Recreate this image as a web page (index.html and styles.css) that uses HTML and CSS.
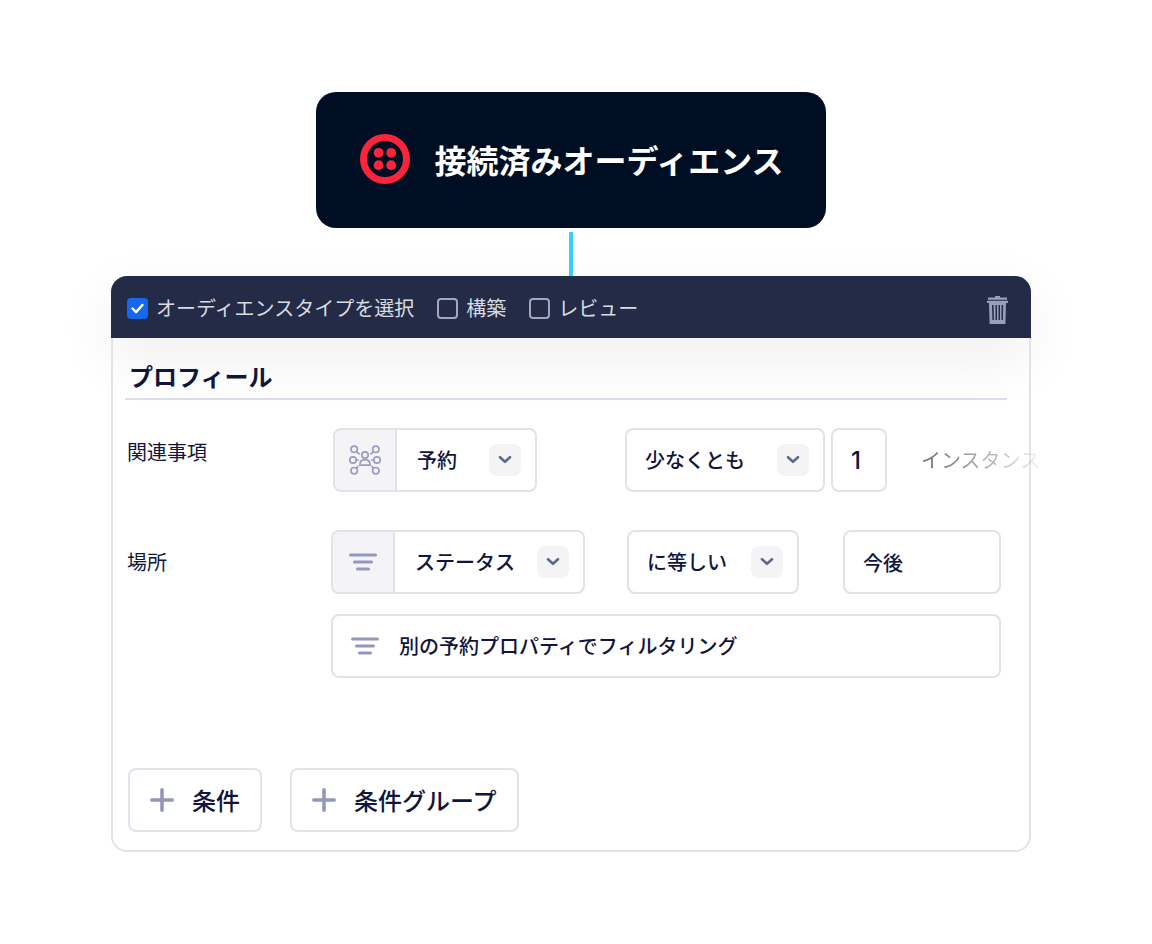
FILE: index.html
```html
<!DOCTYPE html>
<html lang="ja">
<head>
    <meta charset="UTF-8">
    <meta name="viewport" content="width=device-width, initial-scale=1.0">
    <title>接続済みオーディエンス</title>
    <link rel="stylesheet" href="styles.css">
</head>
<body>
    <main class="page">
        <header class="source">
            <svg class="source-logo" viewBox="0 0 50 50" aria-hidden="true">
                <circle cx="25" cy="25" r="21.5" fill="none" stroke="#f9253b" stroke-width="7"/>
                <g fill="#f9253b">
                    <circle cx="18.6" cy="18.8" r="4.9"/>
                    <circle cx="31.2" cy="18.8" r="4.9"/>
                    <circle cx="18.6" cy="31.2" r="4.9"/>
                    <circle cx="31.2" cy="31.2" r="4.9"/>
                </g>
            </svg>
            <h1 class="source-title">接続済みオーディエンス</h1>
        </header>
        <div class="connector"></div>

        <section class="card">
            <div class="card-header">
                <label class="step"><input class="step-check" type="checkbox" checked>オーディエンスタイプを選択</label>
                <label class="step"><input class="step-check" type="checkbox">構築</label>
                <label class="step"><input class="step-check" type="checkbox">レビュー</label>
                <button class="button-delete" type="button" aria-label="削除">
                    <svg width="21" height="28" viewBox="0 0 21 28" fill="#98a0b8">
                        <path d="M8 0h5v1.4h7v2.4H1V1.4h7z"/>
                        <path d="M0 4.8h21V7h-2l-.6 21H2.6L2 7H0z"/>
                        <path d="M5 9h1.6l.3 15H5.4zM8.5 9H10v15H8.5zM11.5 9H13v15h-1.5zM14.6 9h1.6l-.3 15h-1.5z" fill="#242b47"/>
                    </svg>
                </button>
            </div>

            <div class="card-body">
                <h2 class="card-title">プロフィール</h2>

                <div class="row row-relation">
                    <label class="row-label" for="relation">関連事項</label>
                    <div class="field field-relation">
                        <span class="field-icon">
                            <svg width="32" height="32" viewBox="0 0 32 32" fill="none" stroke="#9a9cc0" stroke-width="1.7">
                                <circle cx="5.2" cy="5.3" r="3.2"/>
                                <circle cx="26.8" cy="5.3" r="3.2"/>
                                <circle cx="4" cy="16" r="3.2"/>
                                <circle cx="28" cy="16" r="3.2"/>
                                <circle cx="5.2" cy="26.7" r="3.2"/>
                                <circle cx="26.8" cy="26.7" r="3.2"/>
                                <circle cx="16" cy="11" r="3.2"/>
                                <path d="M10.8 21.2c0-3.6 2-5.6 5.2-5.6s5.2 2 5.2 5.6z"/>
                                <path d="M7.6 7.6l3 2.8M24.4 7.6l-3 2.8M7.2 16h2.6M24.8 16h-2.6M7.4 24.2l2-2M24.6 24.2l-2-2"/>
                            </svg>
                        </span>
                        <select class="field-select" id="relation"><option>予約</option></select>
                        <span class="chip"><svg width="14" height="10" viewBox="0 0 14 10"><path d="M2 2.2l5 4.6 5-4.6"/></svg></span>
                    </div>
                    <div class="field field-operator">
                        <select class="field-select" aria-label="回数の条件"><option>少なくとも</option></select>
                        <span class="chip"><svg width="14" height="10" viewBox="0 0 14 10"><path d="M2 2.2l5 4.6 5-4.6"/></svg></span>
                    </div>
                    <input class="field field-count" type="text" value="1" aria-label="回数">
                    <span class="unit">インスタンス</span>
                </div>

                <div class="row row-place">
                    <label class="row-label" for="place">場所</label>
                    <div class="field field-property">
                        <span class="field-icon">
                            <svg width="28" height="18" viewBox="0 0 28 18" stroke="#9397bb" stroke-width="3" stroke-linecap="round"><path d="M1.5 2h25M5.5 9h17M8.5 16h11"/></svg>
                        </span>
                        <select class="field-select" id="place"><option>ステータス</option></select>
                        <span class="chip"><svg width="14" height="10" viewBox="0 0 14 10"><path d="M2 2.2l5 4.6 5-4.6"/></svg></span>
                    </div>
                    <div class="field field-equal">
                        <select class="field-select" aria-label="比較"><option>に等しい</option></select>
                        <span class="chip"><svg width="14" height="10" viewBox="0 0 14 10"><path d="M2 2.2l5 4.6 5-4.6"/></svg></span>
                    </div>
                    <input class="field field-value" type="text" value="今後" aria-label="値">
                </div>

                <button class="field button-filter" type="button">
                    <svg width="28" height="18" viewBox="0 0 28 18" stroke="#9397bb" stroke-width="3" stroke-linecap="round"><path d="M1.5 2h25M5.5 9h17M8.5 16h11"/></svg>
                    別の予約プロパティでフィルタリング
                </button>

                <div class="actions">
                    <button class="field button-add" type="button">
                        <svg width="24" height="24" viewBox="0 0 24 24" stroke="#9497b9" stroke-width="3.6" stroke-linecap="round"><path d="M1.8 12h20.4M12 1.8v20.4"/></svg>
                        条件
                    </button>
                    <button class="field button-add" type="button">
                        <svg width="24" height="24" viewBox="0 0 24 24" stroke="#9497b9" stroke-width="3.6" stroke-linecap="round"><path d="M1.8 12h20.4M12 1.8v20.4"/></svg>
                        条件グループ
                    </button>
                </div>
            </div>
        </section>
    </main>
</body>
</html>
```
FILE: styles.css
```css
* { box-sizing: border-box; }

body {
    margin: 0;
    background-color: #ffffff;
    color: #10153d;
    font-family: "Noto Sans CJK JP", sans-serif;
    font-size: 20px;
    line-height: 28px;
}
h1, h2 { margin: 0; }
svg { display: block; flex-shrink: 0; }
button, input, select {
    font: inherit;
    color: inherit;
    margin: 0;
}

.page {
    display: flex;
    flex-direction: column;
    align-items: center;
    padding: 92px 121px 92px 111px;
}

/* top node */
.source {
    display: flex;
    align-items: center;
    gap: 24px;
    height: 136px;
    padding: 0 42px 2px 44px;
    border-radius: 20px;
    background-color: #000e24;
    color: #ffffff;
}
.source-logo {
    width: 50px;
    height: 50px;
}
.source-title {
    font-size: 32px;
    line-height: 48px;
    font-weight: 700;
    white-space: nowrap;
}
.connector {
    width: 4px;
    height: 44px;
    margin-top: 4px;
    background-color: #36d0fa;
}

/* card */
.card { width: 100%; }
.card-header {
    display: flex;
    align-items: center;
    gap: 23px;
    height: 62px;
    padding: 2px 23px 0 16px;
    border-radius: 16px 16px 0 0;
    background-color: #242b47;
    color: #d6dbe0;
    box-shadow: 0 20px 60px rgba(20, 20, 40, 0.07);
}
.step {
    display: flex;
    align-items: center;
    gap: 8px;
    white-space: nowrap;
}
.step-check {
    appearance: none;
    width: 21px;
    height: 21px;
    border: 2px solid #a3a8b9;
    border-radius: 4px;
}
.step-check:checked {
    border: none;
    background: #1866ee url("data:image/svg+xml,%3Csvg xmlns='http://www.w3.org/2000/svg' viewBox='0 0 21 21'%3E%3Cpath d='M5.5 10.5l3.6 3.6 6.4-7.2' fill='none' stroke='white' stroke-width='2.4' stroke-linecap='round' stroke-linejoin='round'/%3E%3C/svg%3E") center / 21px;
}
.button-delete {
    margin-left: auto;
    padding: 4px 0 0;
    border: none;
    background: none;
    cursor: pointer;
}

.card-body {
    padding: 0 22px 18px 12px;
    border: 2px solid #e1e2ea;
    border-top: none;
    border-radius: 0 0 16px 16px;
}
.card-title {
    padding: 20px 4px 4px;
    border-bottom: 2px solid #dcdcea;
    font-size: 24px;
    line-height: 36px;
    font-weight: 700;
}

/* condition rows */
.row {
    display: flex;
    align-items: center;
    padding: 0 6px 0 2px;
}
.row-relation { margin-top: 28px; }
.row-place { margin-top: 38px; }
.row-label {
    flex: 0 0 204px;
}
.row-relation .row-label {
    flex-basis: 206px;
    padding-bottom: 16px;
}

.field {
    height: 64px;
    border: 2px solid #e1e2ea;
    border-radius: 8px;
    background-color: #ffffff;
    font-weight: 500;
}
div.field {
    position: relative;
    display: flex;
    flex-shrink: 0;
    overflow: hidden;
}
.field-icon {
    display: flex;
    align-items: center;
    justify-content: center;
    flex: 0 0 62px;
    border-right: 2px solid #e1e2ea;
    background-color: #f4f4f7;
}
.field-select {
    appearance: none;
    flex: 1;
    min-width: 0;
    padding: 0 48px 0 18px;
    border: none;
    background: none;
}
.field-icon + .field-select { padding-left: 20px; }
.chip {
    position: absolute;
    top: 14px;
    right: 14px;
    display: flex;
    align-items: center;
    justify-content: center;
    width: 32px;
    height: 32px;
    border-radius: 8px;
    background-color: #f4f4f6;
    pointer-events: none;
}
.chip path {
    fill: none;
    stroke: #606b8c;
    stroke-width: 2.6;
    stroke-linecap: round;
    stroke-linejoin: round;
}
.field-relation {
    width: 204px;
    margin-right: 88px;
}
.field-operator {
    width: 200px;
    margin-right: 6px;
}
.field-count {
    width: 56px;
    flex-shrink: 0;
    padding: 0 18px;
    font-family: Inter, sans-serif;
    font-size: 24px;
}
.unit {
    margin-left: 34px;
    white-space: nowrap;
    color: transparent;
    background: linear-gradient(90deg, #666666, rgba(190, 190, 190, 0.2));
    -webkit-background-clip: text;
    background-clip: text;
}
.field-property {
    width: 254px;
    margin-right: 42px;
}
.field-equal {
    width: 172px;
    margin-right: 44px;
}
.field-value {
    flex: 1;
    min-width: 0;
    padding: 0 18px;
}
.button-filter {
    display: flex;
    align-items: center;
    gap: 20px;
    width: calc(100% - 212px);
    margin: 20px 6px 0 206px;
    padding: 0 18px;
    cursor: pointer;
}

.actions {
    display: flex;
    gap: 28px;
    margin: 90px 0 0 3px;
}
.button-add {
    display: flex;
    align-items: center;
    gap: 18px;
    padding: 0 20px;
    font-size: 24px;
    line-height: 36px;
    cursor: pointer;
}
```
